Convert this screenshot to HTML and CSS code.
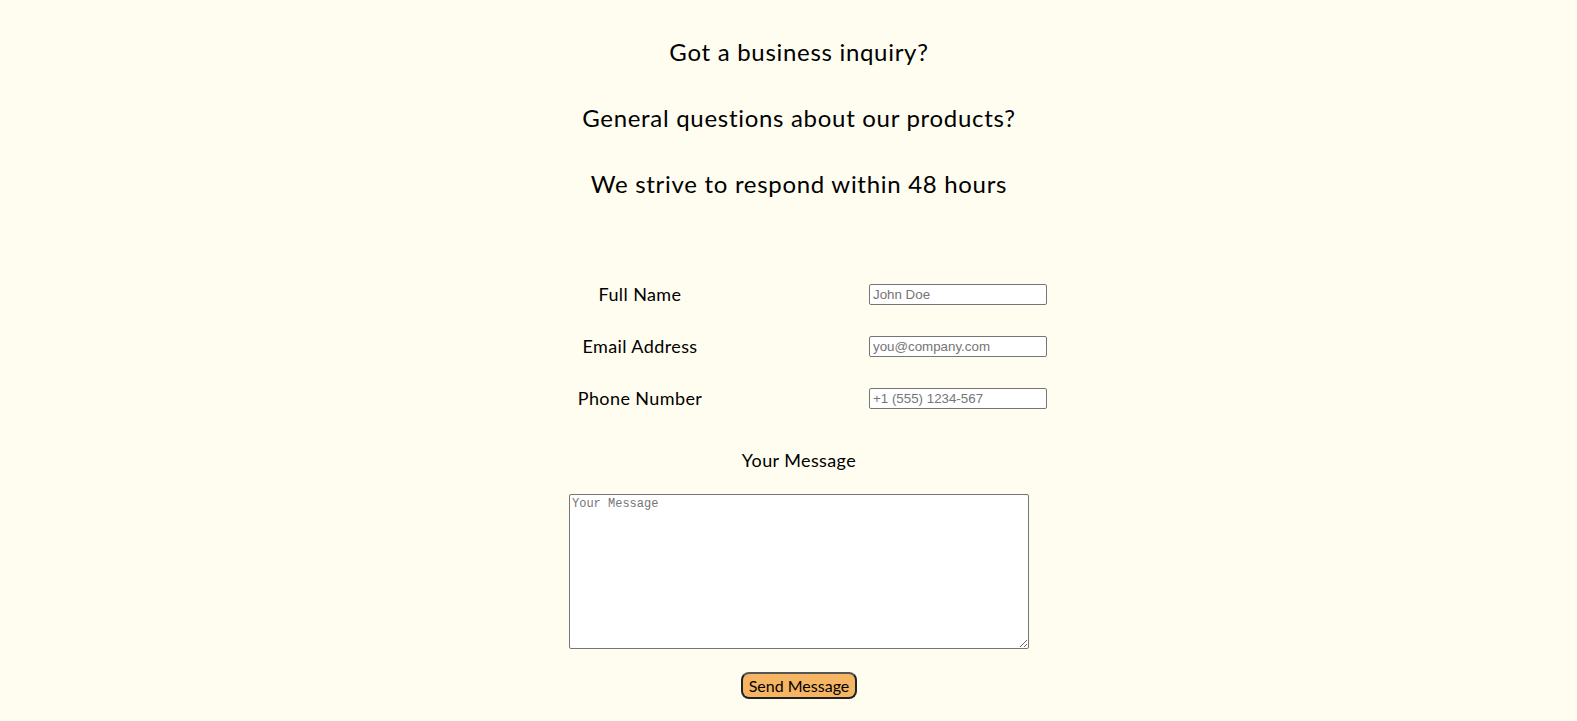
FILE: index.html
```html
<!DOCTYPE html>
<html lang="en">
<head>
  <meta charset="UTF-8" />
  <meta name="viewport" content="width=device-width, initial-scale=1.0" />
  <title>Contact Us</title>
  <link rel="stylesheet" href="styles.css">
</head>
<body>
  <main class="contact">
    <section class="intro">
      <p>Got a business inquiry?</p>
      <p>General questions about our products?</p>
      <p>We strive to respond within 48 hours</p>
    </section>

    <form class="contact-form" onsubmit="return false">
      <div class="fields">
        <label for="name">Full Name</label>
        <input type="text" id="name" placeholder="John Doe">
        <label for="email">Email Address</label>
        <input type="email" id="email" placeholder="you@company.com">
        <label for="phone">Phone Number</label>
        <input type="tel" id="phone" placeholder="+1 (555) 1234-567">
      </div>
      <label for="message" class="msg-label">Your Message</label>
      <textarea id="message" placeholder="Your Message"></textarea>
      <button type="submit">Send Message</button>
    </form>
  </main>
</body>
</html>
```

FILE: styles.css
```css
body { margin: 0; background: #fffdf0; color: #000; font-family: Lato, "Noto Sans", sans-serif; }
.contact { padding: 37px 0 0 21px; display: flex; flex-direction: column; align-items: center; }
.intro { text-align: center; }
.intro p { font-size: 24px; line-height: 30px; margin: 0 0 36px; letter-spacing: 0.7px; }
.contact-form { display: flex; flex-direction: column; align-items: center; margin-top: 48px; }
.fields { display: grid; grid-template-columns: 178px 178px; column-gap: 140px; row-gap: 30px; align-items: center; }
.fields label { text-align: center; font-size: 18px; letter-spacing: 0.4px; }
input { font-family: Arial, "Liberation Sans", sans-serif; font-size: 13.33px; width: 178px; box-sizing: border-box; padding: 2px 3px; border: 1px solid #767676; border-radius: 2px; }
.msg-label { font-size: 18px; letter-spacing: 0.4px; margin-top: 40px; }
textarea { width: 460px; height: 155px; box-sizing: border-box; margin-top: 23px; font-family: "Liberation Mono", monospace; font-size: 12px; padding: 2px; border: 1px solid #767676; border-radius: 2px; }
button { margin-top: 23px; font-family: inherit; font-size: 16px; background: #f5b563; border: 2px solid #222; border-top-color: #555; border-radius: 8px; padding: 2px 6px; cursor: pointer; }
```
